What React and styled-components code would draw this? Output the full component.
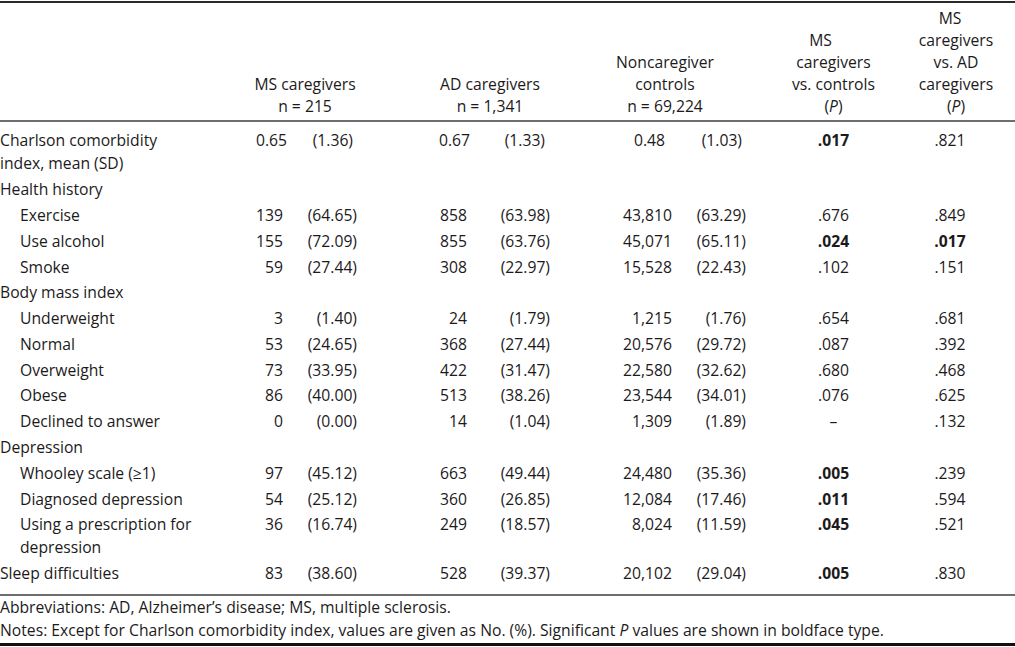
import React from 'react';
import styled, { createGlobalStyle } from 'styled-components';

const Global = createGlobalStyle`
  html, body { margin: 0; padding: 0; background: #fff; }
  body { font-family: "Open Sans", "Noto Sans", sans-serif; color: #1c1a1b; font-size: 15.7px; }
`;

const COLS = '230px 60px 80px 105px 85px 120px 90px 127px 118px';

const Page = styled.div`
  width: 1015px;
  margin-top: 1px;
  border-top: 2px solid #2a2a2a;
`;

const Header = styled.div`
  display: grid;
  grid-template-columns: ${COLS};
  align-items: end;
  padding: 4px 0 2.5px;
`;

const Rule = styled.div`
  height: ${p => p.$h || 2}px;
  background: ${p => p.$c || '#707070'};
`;

const HeadCell = styled.div`
  grid-column: span ${p => p.$span || 1};
  text-align: center;
  line-height: 22px;
  padding-left: ${p => p.$pl || 0}px;
`;

const HeadLine = styled.span`
  display: inline-block;
  padding-right: ${p => p.$shift || 0}px;
`;

const Body = styled.div`
  display: flex;
  flex-direction: column;
  padding: 6.5px 0 7.5px;
`;

const Row = styled.div`
  display: grid;
  grid-template-columns: ${COLS};
  align-items: start;
  padding: 1.4px 0;
  line-height: 23px;
`;

const LabelCell = styled.div`
  padding-left: ${p => (p.$indent ? 20 : 0)}px;
`;

const Num = styled.div`
  text-align: right;
  white-space: nowrap;
  padding-right: ${p => p.$pr}px;
`;

const PCell = styled.div`
  text-align: center;
  padding-right: ${p => p.$pr || 0}px;
  font-weight: ${p => (p.$bold ? 700 : 400)};
`;

const Footer = styled.div`
  padding-bottom: 1px;
  border-bottom: 3px solid #111;
`;

const Note = styled.p`
  margin: 0;
  line-height: 23px;
`;

const numPad = [
  { pr: 7, mpr: 3 },
  { pr: 13, mpr: 17 },
  { pr: 8, mpr: 5 },
  { pr: 10, mpr: 15 },
  { pr: 8, mpr: 15 },
  { pr: 24, mpr: 28 },
];

const rows = [
  { label: ['Charlson comorbidity', 'index, mean (SD)'], mean: true, v: ['0.65', '(1.36)', '0.67', '(1.33)', '0.48', '(1.03)'], p1: '.017', b1: true, p2: '.821' },
  { label: 'Health history', section: true },
  { label: 'Exercise', indent: true, v: ['139', '(64.65)', '858', '(63.98)', '43,810', '(63.29)'], p1: '.676', p2: '.849' },
  { label: 'Use alcohol', indent: true, v: ['155', '(72.09)', '855', '(63.76)', '45,071', '(65.11)'], p1: '.024', b1: true, p2: '.017', b2: true },
  { label: 'Smoke', indent: true, v: ['59', '(27.44)', '308', '(22.97)', '15,528', '(22.43)'], p1: '.102', p2: '.151' },
  { label: 'Body mass index', section: true },
  { label: 'Underweight', indent: true, v: ['3', '(1.40)', '24', '(1.79)', '1,215', '(1.76)'], p1: '.654', p2: '.681' },
  { label: 'Normal', indent: true, v: ['53', '(24.65)', '368', '(27.44)', '20,576', '(29.72)'], p1: '.087', p2: '.392' },
  { label: 'Overweight', indent: true, v: ['73', '(33.95)', '422', '(31.47)', '22,580', '(32.62)'], p1: '.680', p2: '.468' },
  { label: 'Obese', indent: true, v: ['86', '(40.00)', '513', '(38.26)', '23,544', '(34.01)'], p1: '.076', p2: '.625' },
  { label: 'Declined to answer', indent: true, v: ['0', '(0.00)', '14', '(1.04)', '1,309', '(1.89)'], p1: '–', p2: '.132' },
  { label: 'Depression', section: true },
  { label: 'Whooley scale (≥1)', indent: true, v: ['97', '(45.12)', '663', '(49.44)', '24,480', '(35.36)'], p1: '.005', b1: true, p2: '.239' },
  { label: 'Diagnosed depression', indent: true, v: ['54', '(25.12)', '360', '(26.85)', '12,084', '(17.46)'], p1: '.011', b1: true, p2: '.594' },
  { label: ['Using a prescription for', 'depression'], indent: true, v: ['36', '(16.74)', '249', '(18.57)', '8,024', '(11.59)'], p1: '.045', b1: true, p2: '.521' },
  { label: 'Sleep difficulties', v: ['83', '(38.60)', '528', '(39.37)', '20,102', '(29.04)'], p1: '.005', b1: true, p2: '.830' },
];

function Label({ label }) {
  const parts = Array.isArray(label) ? label : [label];
  return parts.map((t, i) => (
    <React.Fragment key={i}>
      {i > 0 && <br />}
      {t}
    </React.Fragment>
  ));
}

function DataRow({ r }) {
  if (r.section) {
    return (
      <Row>
        <LabelCell>{r.label}</LabelCell>
      </Row>
    );
  }
  return (
    <Row>
      <LabelCell $indent={r.indent}><Label label={r.label} /></LabelCell>
      {r.v.map((val, i) => (
        <Num key={i} $pr={r.mean ? numPad[i].mpr : numPad[i].pr}>{val}</Num>
      ))}
      <PCell $bold={r.b1}>{r.p1}</PCell>
      <PCell $pr={12} $bold={r.b2}>{r.p2}</PCell>
    </Row>
  );
}

export default function App() {
  return (
    <Page>
      <Global />
      <Header>
        <HeadCell />
        <HeadCell $span={2} $pl={10}>MS caregivers<br />n = 215</HeadCell>
        <HeadCell $span={2} $pl={50}>AD caregivers<br />n = 1,341</HeadCell>
        <HeadCell $span={2}>Noncaregiver<br />controls<br />n = 69,224</HeadCell>
        <HeadCell><HeadLine $shift={26}>MS</HeadLine><br />caregivers<br />vs. controls<br />(<i>P</i>)</HeadCell>
        <HeadCell><HeadLine $shift={12}>MS</HeadLine><br />caregivers<br />vs. AD<br />caregivers<br />(<i>P</i>)</HeadCell>
      </Header>
      <Rule $h={2} $c="#6e6e6e" />
      <Body>
        {rows.map((r, i) => <DataRow key={i} r={r} />)}
      </Body>
      <Rule $h={2} $c="#6e6e6e" />
      <Footer>
        <Note>Abbreviations: AD, Alzheimer’s disease; MS, multiple sclerosis.</Note>
        <Note>Notes: Except for Charlson comorbidity index, values are given as No. (%). Significant <i>P</i> values are shown in boldface type.</Note>
      </Footer>
    </Page>
  );
}
